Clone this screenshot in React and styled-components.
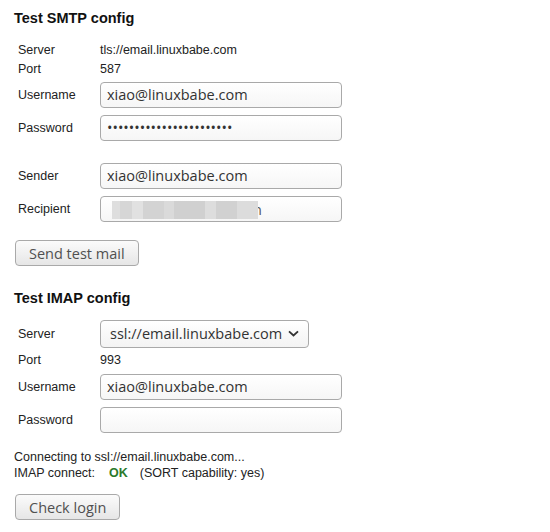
import React from "react";
import styled, { createGlobalStyle } from "styled-components";

const GlobalStyle = createGlobalStyle`
  body {
    margin: 0;
    background: #fff;
    font-family: "Liberation Sans", Arial, sans-serif;
    color: #222;
  }
`;

const Page = styled.div`
  padding: 8px 14px 0;
  width: 550px;
  box-sizing: border-box;
`;

const Heading = styled.h3`
  margin: 0 0 ${(p) => p.$gap || 12}px;
  font-size: 14.5px;
  line-height: 20px;
  font-weight: bold;
  color: #111;
`;

const Table = styled.div`
  display: grid;
  grid-template-columns: 82px 242px;
  padding-left: 4px;
  font-size: 12.5px;
`;

const Label = styled.div`
  display: flex;
  align-items: center;
  height: ${(p) => p.$h || 19}px;
`;

const Value = styled.div`
  display: flex;
  align-items: center;
  height: ${(p) => p.$h || 19}px;
  color: #222;
`;

const Spacer = styled.div`
  grid-column: 1 / span 2;
  height: 15px;
`;

const fieldFont = `"Open Sans", "DejaVu Sans", sans-serif`;

const Input = styled.input`
  box-sizing: border-box;
  width: 242px;
  height: 26px;
  margin: 0;
  padding: 0 6px;
  border: 1px solid #a9a9a9;
  border-radius: 4px;
  background: linear-gradient(#ffffff, #f6f6f6);
  font-family: ${fieldFont};
  font-size: 14.5px;
  color: #333;
  outline: none;
`;

const FieldWrap = styled.div`
  position: relative;
`;

const Mosaic = styled.div`
  position: absolute;
  left: 12px;
  top: 5px;
  height: 18px;
  display: flex;
  align-items: stretch;
  pointer-events: none;
`;

const Tile = styled.span`
  position: relative;
  z-index: 1;
  display: block;
  background: ${(p) => p.$c};
`;

const Peek = styled.span`
  margin-left: -5px;
  font-family: ${fieldFont};
  font-size: 14.5px;
  line-height: 18px;
  color: #555;
`;

const SelectWrap = styled.div`
  position: relative;
  width: 209px;
`;

const Select = styled.select`
  box-sizing: border-box;
  width: 209px;
  height: 28px;
  margin: 0;
  padding: 0 24px 0 9px;
  border: 1px solid #a9a9a9;
  border-radius: 4px;
  background: linear-gradient(#ffffff, #f3f3f3);
  appearance: none;
  font-family: ${fieldFont};
  font-size: 14.5px;
  color: #333;
  outline: none;
`;

const Chevron = styled.svg`
  position: absolute;
  right: 10px;
  top: 10px;
  pointer-events: none;
`;

const Button = styled.button`
  box-sizing: border-box;
  height: 26px;
  margin: ${(p) => p.$top}px 0 0 1px;
  padding: 0 13px;
  border: 1px solid #a9a9a9;
  border-radius: 4px;
  background: linear-gradient(#fbfbfb, #e6e6e6);
  font-family: ${fieldFont};
  font-size: 14.5px;
  color: #505050;
  cursor: pointer;
`;

const Section = styled.section`
  display: flex;
  flex-direction: column;
  align-items: flex-start;
  margin-bottom: 22px;
`;

const Status = styled.div`
  margin-top: 13px;
  font-size: 12.5px;
  line-height: 16px;
  color: #222;
`;

const Ok = styled.b`
  display: inline-block;
  margin: 0 12px 0 14px;
  color: #2b7a2b;
`;

const tiles = [
  [8, "#dedede"],
  [12, "#d6d6d6"],
  [11, "#e1e1e1"],
  [21, "#d3d3d3"],
  [10, "#dadada"],
  [31, "#d0d0d0"],
  [11, "#dddddd"],
  [21, "#d1d1d1"],
  [21, "#dcdcdc"],
];

function InputRow({ label, children }) {
  return (
    <>
      <Label $h={33}>{label}</Label>
      <Value $h={33}>{children}</Value>
    </>
  );
}

export default function App() {
  return (
    <Page>
      <GlobalStyle />
      <Section>
        <Heading>Test SMTP config</Heading>
        <Table>
          <Label>Server</Label>
          <Value>tls://email.linuxbabe.com</Value>
          <Label>Port</Label>
          <Value>587</Value>
          <InputRow label="Username">
            <Input defaultValue="xiao@linuxbabe.com" />
          </InputRow>
          <InputRow label="Password">
            <Input type="password" defaultValue="xxxxxxxxxxxxxxxxxxxxxxx" />
          </InputRow>
          <Spacer />
          <InputRow label="Sender">
            <Input defaultValue="xiao@linuxbabe.com" />
          </InputRow>
          <InputRow label="Recipient">
            <FieldWrap>
              <Input defaultValue="" />
              <Mosaic>
                {tiles.map(([w, c], i) => (
                  <Tile key={i} $c={c} style={{ width: w }} />
                ))}
                <Peek>n</Peek>
              </Mosaic>
            </FieldWrap>
          </InputRow>
        </Table>
        <Button $top={15}>Send test mail</Button>
      </Section>

      <Section>
        <Heading $gap={10}>Test IMAP config</Heading>
        <Table>
          <Label $h={31}>Server</Label>
          <Value $h={31}>
            <SelectWrap>
              <Select defaultValue="ssl://email.linuxbabe.com">
                <option>ssl://email.linuxbabe.com</option>
              </Select>
              <Chevron width="11" height="7" viewBox="0 0 11 7">
                <path
                  d="M1 1.3 L5.5 5.5 L10 1.3"
                  fill="none"
                  stroke="#333"
                  strokeWidth="1.8"
                />
              </Chevron>
            </SelectWrap>
          </Value>
          <Label $h={21}>Port</Label>
          <Value $h={21}>993</Value>
          <InputRow label="Username">
            <Input defaultValue="xiao@linuxbabe.com" />
          </InputRow>
          <InputRow label="Password">
            <Input type="password" defaultValue="" />
          </InputRow>
        </Table>
        <Status>
          Connecting to ssl://email.linuxbabe.com...
          <br />
          IMAP connect:<Ok>OK</Ok>(SORT capability: yes)
        </Status>
        <Button $top={13}>Check login</Button>
      </Section>
    </Page>
  );
}
